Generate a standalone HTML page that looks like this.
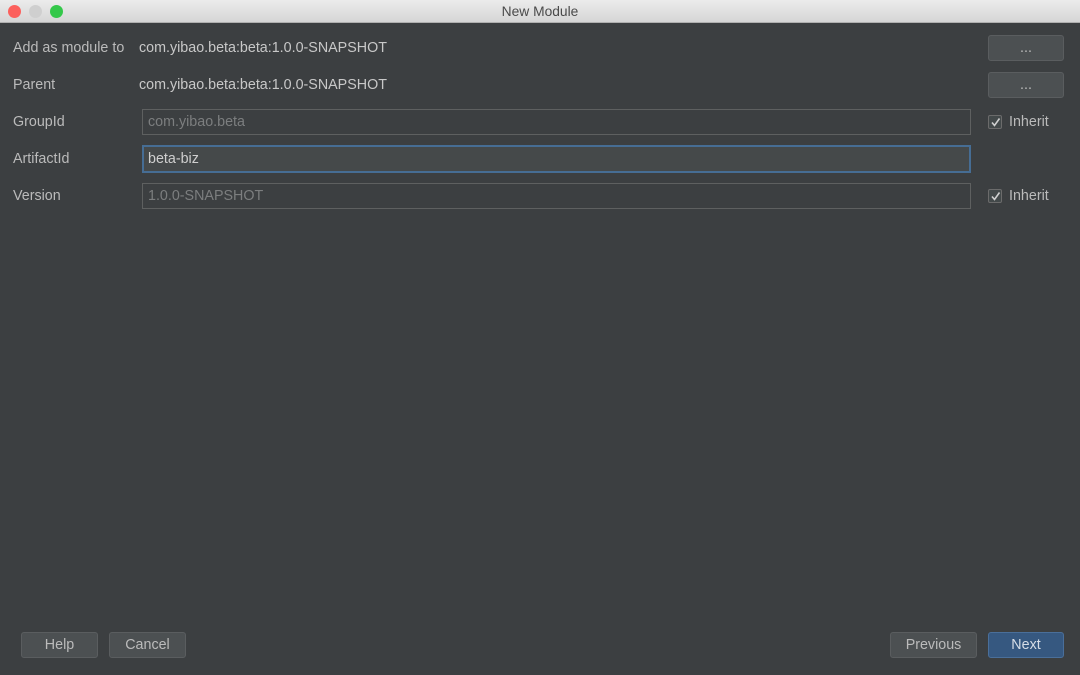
<!DOCTYPE html>
<html><head><meta charset="utf-8"><style>
*{box-sizing:border-box;margin:0;padding:0}
body{width:1080px;height:675px;background:#3c3f41;font-family:"Liberation Sans",sans-serif;font-size:14.3px;color:#bbbbbb;position:relative;overflow:hidden}
.title{position:absolute;left:0;top:0;width:1080px;height:23px;background:linear-gradient(#ececec,#d6d6d6);border-bottom:1px solid #b0b0b0;text-align:center;color:#4a4a4a;font-size:13.8px;line-height:24px}
.dot{position:absolute;top:5px;width:13px;height:13px;border-radius:50%}
.a{position:absolute;white-space:nowrap}
.lbl{left:13px}
.field{position:absolute;left:142px;width:829px;height:26px;border:1px solid #5e6060;background:#3c3f41;padding-left:5px;line-height:24px;color:#7c7e7f}
.btn{position:absolute;height:26px;border:1px solid #5a5d5f;background:#4c5052;border-radius:3px;text-align:center;line-height:24px;color:#bbbbbb}
.cb{position:absolute;left:988px;width:14px;height:14px;border:1px solid #6b6b6b;background:#43494a;border-radius:2px}
.cb svg{position:absolute;left:1px;top:1px}
</style></head><body>
<div class="title">New Module
<div class="dot" style="left:8px;background:#fc605c"></div>
<div class="dot" style="left:29px;background:#cfcfcf"></div>
<div class="dot" style="left:50px;background:#34c84a"></div>
</div>
<div class="a lbl" style="top:40px">Add as module to</div>
<div class="a" style="left:139px;top:40px;color:#c8c8c8">com.yibao.beta:beta:1.0.0-SNAPSHOT</div>
<div class="a lbl" style="top:77px">Parent</div>
<div class="a" style="left:139px;top:77px;color:#c8c8c8">com.yibao.beta:beta:1.0.0-SNAPSHOT</div>
<div class="btn" style="left:988px;top:35px;width:76px">...</div>
<div class="btn" style="left:988px;top:72px;width:76px">...</div>
<div class="a lbl" style="top:114px">GroupId</div>
<div class="field" style="top:109px">com.yibao.beta</div>
<div class="a lbl" style="top:151px">ArtifactId</div>
<div class="field" style="top:145px;height:28px;border:2px solid #466d94;background:#45494a;color:#cfcfcf;padding-left:4px;line-height:24px">beta-biz</div>
<div class="a lbl" style="top:188px">Version</div>
<div class="field" style="top:183px">1.0.0-SNAPSHOT</div>
<div class="cb" style="top:115px"><svg width="11" height="11"><path d="M2 5.5L4.5 8.5L9.5 1.5" stroke="#d0d0d0" stroke-width="1.6" fill="none"/></svg></div>
<div class="a" style="left:1009px;top:114px">Inherit</div>
<div class="cb" style="top:189px"><svg width="11" height="11"><path d="M2 5.5L4.5 8.5L9.5 1.5" stroke="#d0d0d0" stroke-width="1.6" fill="none"/></svg></div>
<div class="a" style="left:1009px;top:188px">Inherit</div>
<div class="btn" style="left:21px;top:632px;width:77px">Help</div>
<div class="btn" style="left:109px;top:632px;width:77px">Cancel</div>
<div class="btn" style="left:890px;top:632px;width:87px">Previous</div>
<div class="btn" style="left:988px;top:632px;width:76px;background:#365880;border-color:#4a6f9a;color:#d6dde6">Next</div>
</body></html>
